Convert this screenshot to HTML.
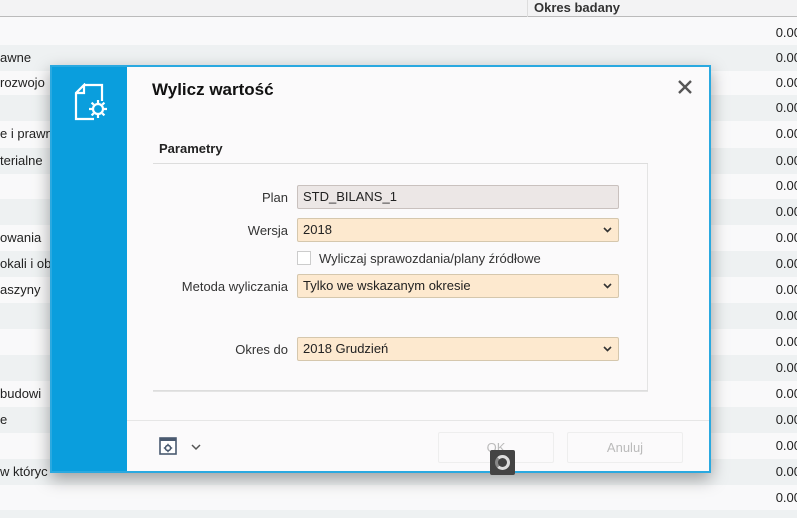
<!DOCTYPE html>
<html><head><meta charset="utf-8"><style>
*{margin:0;padding:0;box-sizing:border-box}
html,body{width:797px;height:518px;overflow:hidden}
body{background:#f9f9fa;font-family:"Liberation Sans",sans-serif;position:relative;color:#222}
.hdr{position:absolute;left:0;top:0;width:797px;height:17px;background:#f3f3f4;border-bottom:1px solid #bbb}
.hdr .c{position:absolute;left:527px;top:0;height:17px;border-left:1px solid #ddd;padding-left:6px;font-weight:bold;font-size:13px;line-height:16px;color:#333}
.row{position:absolute;left:0;width:797px;height:26px;font-size:13px;line-height:26px;color:#222}
.row.g{background:#eef1f2}
.row .v{position:absolute;right:-4px;top:0}
.row .l{position:absolute;left:0;top:0}
.dlg{position:absolute;left:50px;top:65px;width:661px;height:408px;background:#0a9edd;border:2px solid #2aa9e0;box-shadow:0 6px 16px rgba(0,0,0,.35)}
.in{position:absolute;left:75px;top:0;right:0;bottom:0;background:#fbfafb}
.title{position:absolute;left:25px;top:13px;font-size:17px;font-weight:bold;color:#111}
.x{position:absolute;left:550px;top:12px}
.ptitle{position:absolute;left:32px;top:74px;font-size:13px;font-weight:bold}
.line{position:absolute;left:26px;width:495px;height:1px;background:#ddd}
.box{position:absolute;left:26px;top:97px;width:495px;height:228px;border-right:1px solid #e4e4e4;border-bottom:1px solid #e4e4e4}
.lab{position:absolute;right:0;width:200px;text-align:right;font-size:13px;color:#333}
.f{position:absolute;left:170px;width:322px;height:24px;border:1px solid #d5c7ad;border-radius:2px;background:#fde9cf;font-size:13px;line-height:22px;padding-left:5px;color:#222}
.f.p{background:#ece7e6;border-color:#c9c1be}
.f svg{position:absolute;right:6px;top:8px}
.sep{position:absolute;left:0;right:0;top:353px;height:1px;background:#e6e6e6}
.btn{position:absolute;top:365px;width:116px;height:31px;border:1px solid #eee;border-radius:2px;font-size:13px;line-height:30px;text-align:center;color:#bbb}
</style></head><body>
<div class="hdr"><div class="c">Okres badany</div></div>
<div class="row" style="top:20px"><span class="v">0.00</span></div>
<div class="row g" style="top:45px"><span class="l">awne</span><span class="v">0.00</span></div>
<div class="row" style="top:70px"><span class="l">rozwojo</span><span class="v">0.00</span></div>
<div class="row g" style="top:95px"><span class="v">0.00</span></div>
<div class="row" style="top:121px"><span class="l">e i prawn</span><span class="v">0.00</span></div>
<div class="row g" style="top:148px"><span class="l">terialne</span><span class="v">0.00</span></div>
<div class="row" style="top:173px"><span class="v">0.00</span></div>
<div class="row g" style="top:199px"><span class="v">0.00</span></div>
<div class="row" style="top:225px"><span class="l">owania</span><span class="v">0.00</span></div>
<div class="row g" style="top:251px"><span class="l">okali i ob</span><span class="v">0.00</span></div>
<div class="row" style="top:277px"><span class="l">aszyny</span><span class="v">0.00</span></div>
<div class="row g" style="top:303px"><span class="v">0.00</span></div>
<div class="row" style="top:329px"><span class="v">0.00</span></div>
<div class="row g" style="top:355px"><span class="v">0.00</span></div>
<div class="row" style="top:381px"><span class="l">budowi</span><span class="v">0.00</span></div>
<div class="row g" style="top:407px"><span class="l">e</span><span class="v">0.00</span></div>
<div class="row" style="top:433px"><span class="v">0.00</span></div>
<div class="row g" style="top:459px"><span class="l">w któryc</span><span class="v">0.00</span></div>
<div class="row" style="top:485px"><span class="v">0.00</span></div>
<div class="row g" style="top:510px;height:8px"></div>
<div class="dlg">
<svg style="position:absolute;left:22px;top:16px" width="40" height="40" viewBox="0 0 40 40" fill="none" stroke="#fff" stroke-width="2.2"><path d="M10 2H28V18M20 36H2V10L10 2V10H2"/><circle cx="24" cy="26" r="5"/><path d="M24 17v3M24 32v3M15 26h3M30 26h3M17.6 19.6l2.1 2.1M28.3 30.3l2.1 2.1M17.6 32.4l2.1-2.1M28.3 21.7l2.1-2.1"/></svg>
<div class="in">
<div class="title">Wylicz wartość</div>
<svg class="x" width="16" height="16" viewBox="0 0 16 16" stroke="#555" stroke-width="2.4"><path d="M2 2L14 14M14 2L2 14"/></svg>
<div class="ptitle">Parametry</div>
<div class="line" style="top:96px"></div>
<div class="box"></div>
<div class="lab" style="right:421px;top:123px">Plan</div>
<div class="f p" style="top:118px">STD_BILANS_1</div>
<div class="lab" style="right:421px;top:156px">Wersja</div>
<div class="f" style="top:151px">2018<svg width="9" height="6" viewBox="0 0 9 6"><path d="M1 1l3.5 3.5L8 1" stroke="#333" stroke-width="1.6" fill="none"/></svg></div>
<div style="position:absolute;left:170px;top:184px;width:14px;height:14px;border:1px solid #ccc;background:#fff"></div>
<div style="position:absolute;left:192px;top:184px;font-size:13px;color:#333">Wyliczaj sprawozdania/plany źródłowe</div>
<div class="lab" style="right:421px;top:212px">Metoda wyliczania</div>
<div class="f" style="top:207px">Tylko we wskazanym okresie<svg width="9" height="6" viewBox="0 0 9 6"><path d="M1 1l3.5 3.5L8 1" stroke="#333" stroke-width="1.6" fill="none"/></svg></div>
<div class="lab" style="right:421px;top:275px">Okres do</div>
<div class="f" style="top:270px">2018 Grudzień<svg width="9" height="6" viewBox="0 0 9 6"><path d="M1 1l3.5 3.5L8 1" stroke="#333" stroke-width="1.6" fill="none"/></svg></div>
<div class="line" style="top:323px"></div>
<div class="sep"></div>
<svg style="position:absolute;left:32px;top:370px" width="18" height="18" viewBox="0 0 18 18"><rect x="1" y="1" width="16" height="16" fill="#fff" stroke="#4a5a70" stroke-width="1.6"/><rect x="1" y="1" width="16" height="3" fill="#4a5a70"/><circle cx="9" cy="11" r="2.6" fill="none" stroke="#4a5a70" stroke-width="1.6"/><path d="M9 6.8v1.4M9 13.8v1.4M4.8 11h1.4M11.8 11h1.4" stroke="#4a5a70" stroke-width="1.4"/></svg>
<svg style="position:absolute;left:64px;top:377px" width="10" height="7" viewBox="0 0 10 7"><path d="M1 1l4 4 4-4" stroke="#555" stroke-width="1.5" fill="none"/></svg>
<div class="btn" style="left:311px">OK</div>
<div class="btn" style="left:440px">Anuluj</div>
</div></div>
<div style="position:absolute;left:490px;top:450px;width:25px;height:25px;background:#444;border-radius:2px"><div style="position:absolute;left:5px;top:5px;width:15px;height:15px;border:3px solid #ddd;border-left-color:#888;border-radius:50%"></div></div>
</body></html>
